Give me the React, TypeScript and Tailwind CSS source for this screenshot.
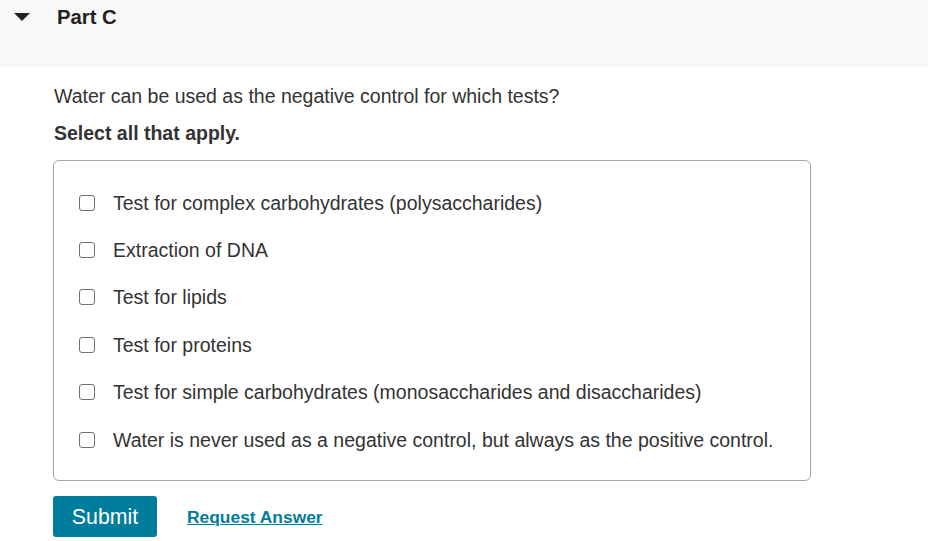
import React from 'react';

const options = [
  'Test for complex carbohydrates (polysaccharides)',
  'Extraction of DNA',
  'Test for lipids',
  'Test for proteins',
  'Test for simple carbohydrates (monosaccharides and disaccharides)',
  'Water is never used as a negative control, but always as the positive control.',
];

export default function App() {
  return (
    <main className="min-h-screen bg-white text-[#333] font-['Liberation_Sans',Arial,sans-serif]">
      {/* Part header */}
      <header className="h-[67px] bg-[#f8f8f8] flex items-start pt-[6px]">
        <div className="flex items-center h-[22px]">
          <svg width="16" height="8" viewBox="0 0 16 8" className="ml-[14px]">
            <polygon points="0,0 16,0 8,8" fill="#222" />
          </svg>
          <h2 className="ml-[27px] text-[20.3px] font-bold text-[#222]">Part C</h2>
        </div>
      </header>

      <section className="pl-[54px] pt-[17px]">
        <p className="text-[19.5px] leading-[24px]">Water can be used as the negative control for which tests?</p>
        <p className="mt-[13px] text-[19.5px] leading-[24px] font-bold">Select all that apply.</p>

        <div className="mt-[15px] w-[758px] -ml-px border border-[#a6a6a6] rounded-[6px] pt-[18px] pb-[17px] pl-[25px]">
          {options.map((o) => (
            <label key={o} className="flex items-center h-[47.4px]">
              <span className="w-[16px] h-[16px] border-[1.5px] border-[#6f6f6f] rounded-[3px] bg-white" />
              <span className="ml-[18px] text-[19.5px] leading-[24px]">{o}</span>
            </label>
          ))}
        </div>

        <div className="mt-[15px] -ml-px flex items-center">
          <button className="w-[104px] h-[41px] pt-[3px] bg-[#007c9c] text-white text-[21.3px] rounded-[3px]">Submit</button>
          <a href="#" className="ml-[30px] text-[17.4px] font-bold text-[#007c9c] underline">Request Answer</a>
        </div>
      </section>
    </main>
  );
}
